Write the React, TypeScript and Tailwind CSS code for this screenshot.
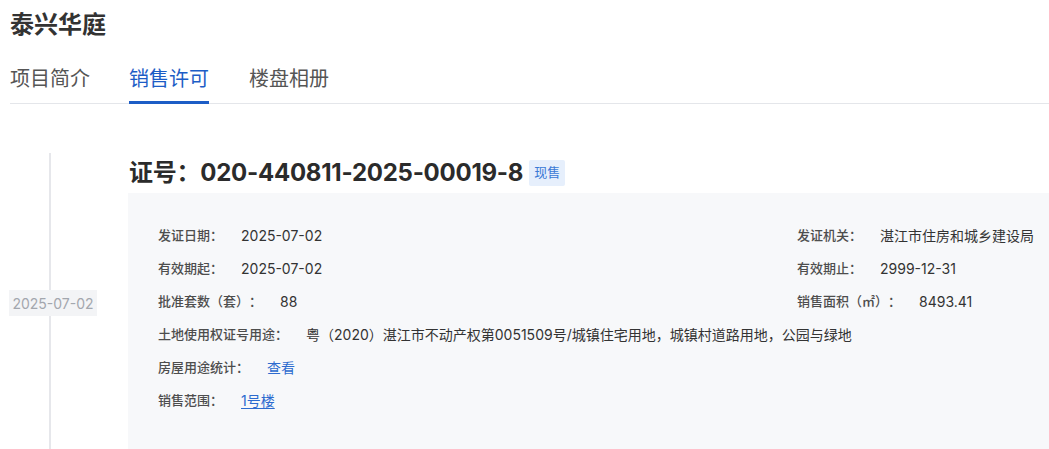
import React from "react";

const font = { fontFamily: 'Inter, "Noto Sans CJK SC", sans-serif' };

interface Row {
  label: string;
  value: React.ReactNode;
}

const leftRows: Row[] = [
  { label: "发证日期：", value: "2025-07-02" },
  { label: "有效期起：", value: "2025-07-02" },
  { label: "批准套数（套）：", value: "88" },
  {
    label: "土地使用权证号用途：",
    value: "粤（2020）湛江市不动产权第0051509号/城镇住宅用地，城镇村道路用地，公园与绿地"
  },
  { label: "房屋用途统计：", value: <span className="text-[#2d6bcf]">查看</span> },
  { label: "销售范围：", value: <span className="text-[#2d6bcf] underline underline-offset-2">1号楼</span> }
];

const rightRows: Row[] = [
  { label: "发证机关：", value: "湛江市住房和城乡建设局" },
  { label: "有效期止：", value: "2999-12-31" },
  { label: "销售面积（㎡）：", value: "8493.41" }
];

function InfoRow({ row }: { row: Row }) {
  return (
    <div className="flex items-center h-[33px] whitespace-nowrap">
      <span className="text-[13px] font-medium text-[#4d4d4d] mr-[18px]">{row.label}</span>
      <span className="text-[14px] text-[#333]">{row.value}</span>
    </div>
  );
}

export default function App() {
  const tabs = ["项目简介", "销售许可", "楼盘相册"];
  return (
    <div className="w-[1049px] h-[449px] overflow-hidden bg-white [text-spacing-trim:space-all]" style={font}>
      <div className="pl-[10px] pt-[9px]">
        <h1 className="text-[24px] leading-[32px] font-bold text-[#333]">泰兴华庭</h1>
        <div className="mt-[24px] flex gap-[40px] border-b border-[#e4e6ea]">
          {tabs.map((t, i) => (
            <div
              key={t}
              className={
                i === 1
                  ? "text-[20px] leading-[28px] pb-[7px] text-[#1d5dc6] border-b-[3px] border-[#1d5dc6] -mb-px -ml-px"
                  : "text-[20px] leading-[28px] pb-[10px] text-[#555]"
              }
            >
              {t}
            </div>
          ))}
        </div>
      </div>

      <div className="flex mt-[49px]">
        <div className="relative w-[128px] shrink-0">
          <div className="absolute left-[49px] top-0 bottom-0 w-[2px] bg-[#e6e7eb]" />
          <div className="relative mt-[137px] ml-[9px] w-[88px] h-[26px] flex items-center justify-center bg-[#f3f4f6] text-[14px] text-[#a3a7ae]">
            2025-07-02
          </div>
        </div>

        <div className="flex-1 pt-[7px]">
          <div className="flex items-center pl-[1px] h-[26px]">
            <span className="text-[24px] font-bold text-[#2b2b2b] leading-[26px] tracking-[-0.25px]">
              证号：020-440811-2025-00019-8
            </span>
            <span className="ml-[6px] h-[26px] px-[5px] flex items-center bg-[#e6effc] text-[13px] text-[#3b7ad6] rounded-[2px]">
              现售
            </span>
          </div>
          <div className="mt-[7px] bg-[#f7f8fa] pl-[30px] pt-[26px] pb-[60px] flex">
            <div className="w-[639px] shrink-0">
              {leftRows.map((r) => (
                <InfoRow key={r.label} row={r} />
              ))}
            </div>
            <div>
              {rightRows.map((r) => (
                <InfoRow key={r.label} row={r} />
              ))}
            </div>
          </div>
        </div>
      </div>
    </div>
  );
}
